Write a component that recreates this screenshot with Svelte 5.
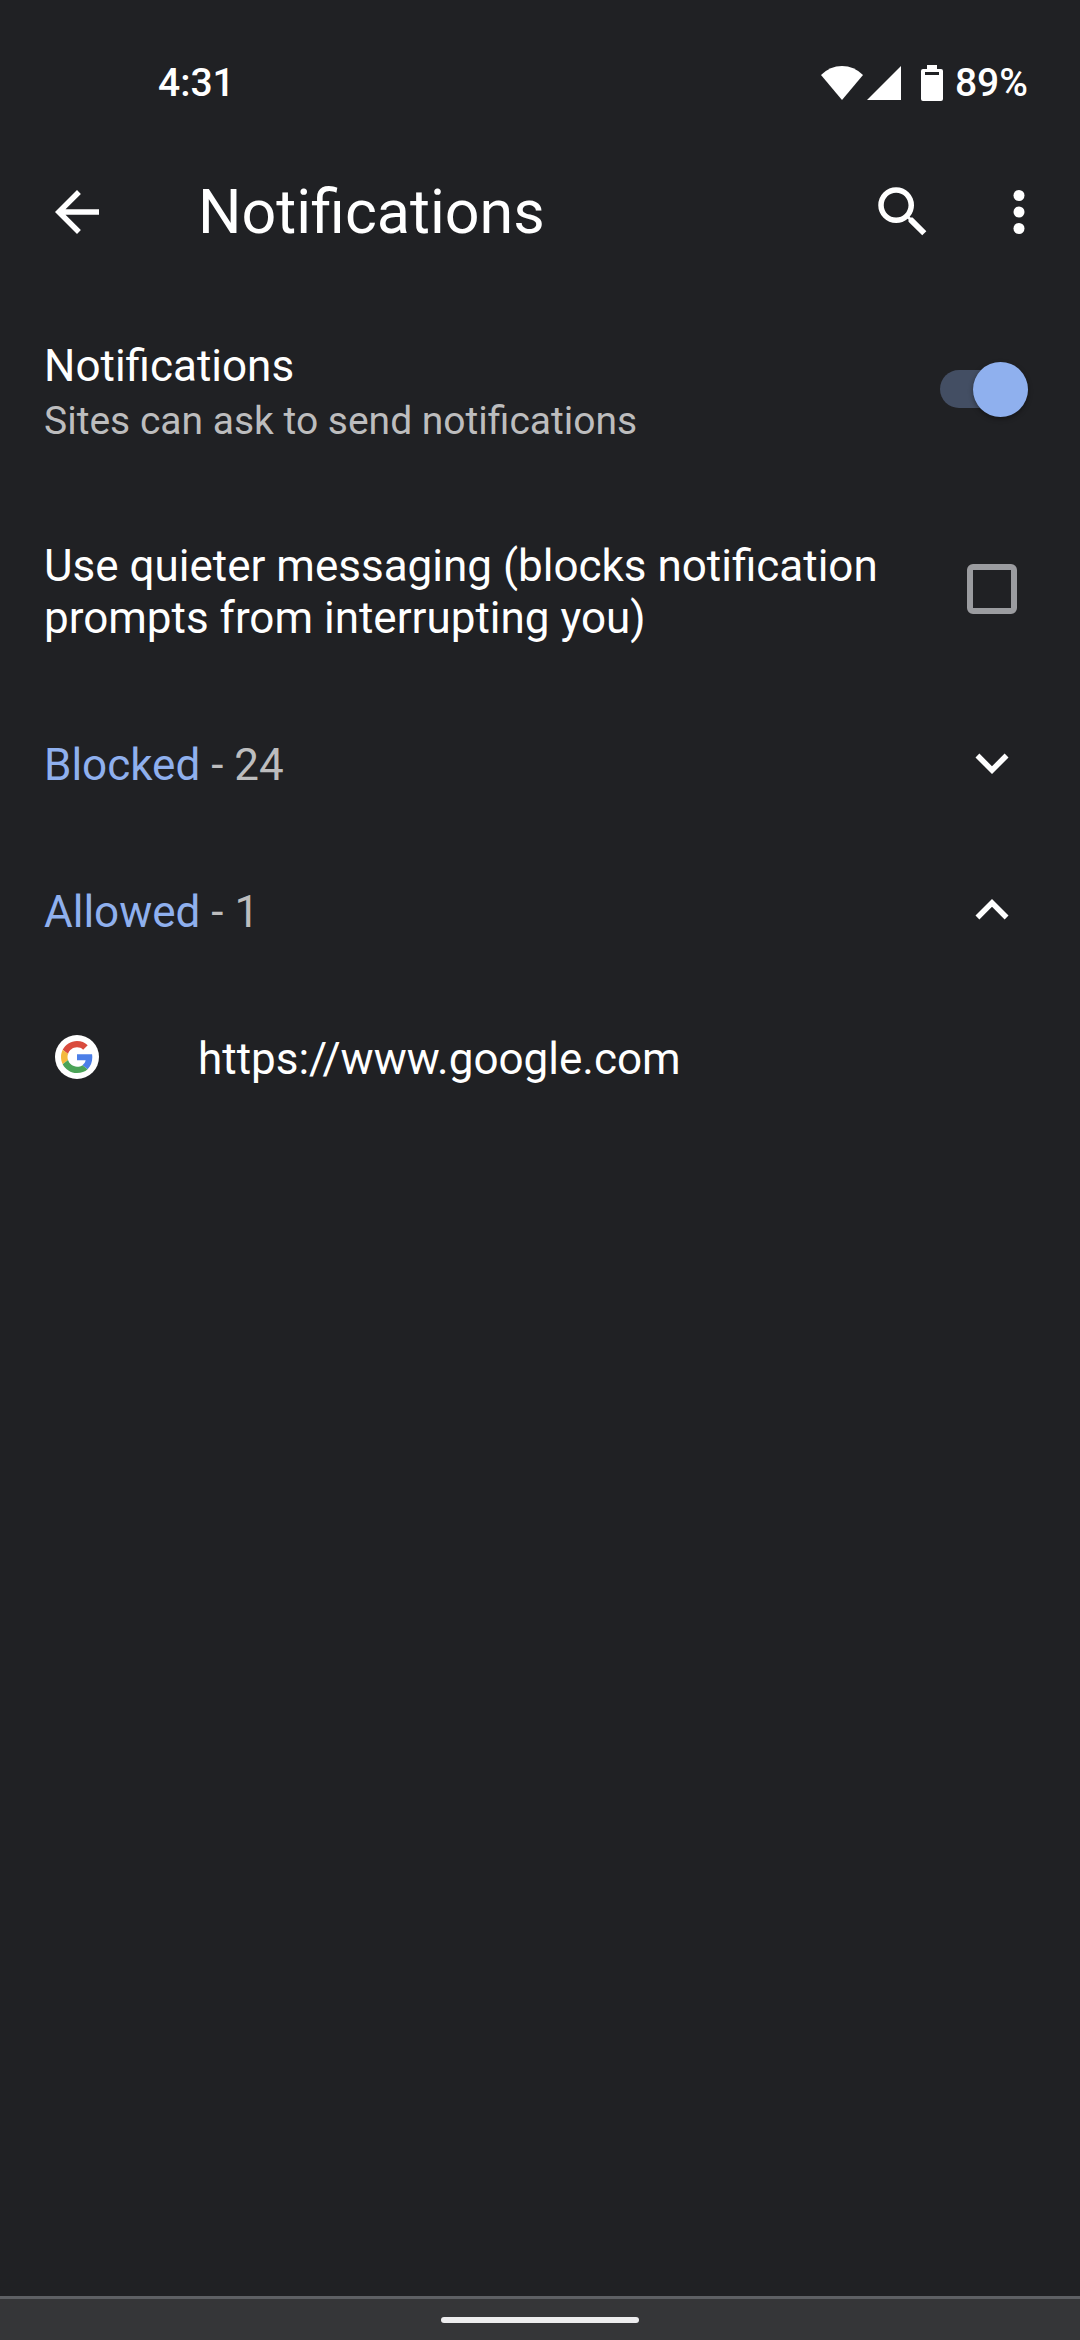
<script lang="ts">
  let askToSend: boolean = $state(true);
  let quieter: boolean = $state(false);
  let blockedOpen: boolean = $state(false);
  let allowedOpen: boolean = $state(true);

  const blockedCount = 24;
  const allowedSites: string[] = ["https://www.google.com"];
</script>

{#snippet chevron(open: boolean)}
  <svg class="icon" viewBox="0 0 24 24" aria-hidden="true">
    {#if open}
      <path d="M12 8l-6 6 1.41 1.41L12 10.83l4.59 4.58L18 14z" />
    {:else}
      <path d="M16.59 8.59L12 13.17 7.41 8.59 6 10l6 6 6-6z" />
    {/if}
  </svg>
{/snippet}

<div class="screen">
  <div class="status">
    <span class="time">4:31</span>
    <div class="indicators">
      <svg class="wifi" viewBox="0 0 42 34" aria-hidden="true">
        <path d="M0 9Q9 0 21 0t21 9L21 34z" />
      </svg>
      <svg class="signal" viewBox="0 0 34 34" aria-hidden="true">
        <path d="M34 0v34H0z" />
      </svg>
      <svg class="battery" viewBox="0 0 22 36" aria-hidden="true">
        <path fill-rule="evenodd" d="M6 0h10v4h4q2 0 2 2v28q0 2-2 2H2q-2 0-2-2V6q0-2 2-2h4zM4 7v3h14V7z" />
      </svg>
      <span class="percent">89%</span>
    </div>
  </div>

  <header>
    <button aria-label="Back">
      <svg class="icon" viewBox="0 0 24 24" aria-hidden="true">
        <path d="M20 11H7.83l5.59-5.59L12 4l-8 8 8 8 1.41-1.41L7.83 13H20z" />
      </svg>
    </button>
    <h1>Notifications</h1>
    <button aria-label="Search">
      <svg class="icon" viewBox="0 0 24 24" aria-hidden="true">
        <path d="M15.5 14h-.79l-.28-.27A6.471 6.471 0 0 0 16 9.5 6.5 6.5 0 1 0 9.5 16c1.61 0 3.09-.59 4.23-1.57l.27.28v.79l5 4.99L20.49 19l-4.99-5zm-6 0C7.01 14 5 11.99 5 9.5S7.01 5 9.5 5 14 7.01 14 9.5 11.99 14 9.5 14z" />
      </svg>
    </button>
    <button aria-label="More options">
      <svg class="icon" viewBox="0 0 24 24" aria-hidden="true">
        <circle cx="12" cy="6" r="2" />
        <circle cx="12" cy="12" r="2" />
        <circle cx="12" cy="18" r="2" />
      </svg>
    </button>
  </header>

  <main>
    <label class="row tall">
      <span class="label">
        Notifications
        <small>Sites can ask to send notifications</small>
      </span>
      <input class="switch" type="checkbox" role="switch" bind:checked={askToSend} />
    </label>

    <label class="row tall">
      <span class="label">Use quieter messaging (blocks notification prompts from interrupting you)</span>
      <input class="check" type="checkbox" bind:checked={quieter} />
    </label>

    <button class="row" aria-expanded={blockedOpen} onclick={() => (blockedOpen = !blockedOpen)}>
      <span class="label"><span class="group">Blocked</span> - {blockedCount}</span>
      {@render chevron(blockedOpen)}
    </button>

    <button class="row" aria-expanded={allowedOpen} onclick={() => (allowedOpen = !allowedOpen)}>
      <span class="label"><span class="group">Allowed</span> - {allowedSites.length}</span>
      {@render chevron(allowedOpen)}
    </button>

    {#if allowedOpen}
      {#each allowedSites as site}
        <a class="row site" href={site}>
          <span class="favicon">
            <svg viewBox="0 0 48 48" aria-hidden="true">
              <path fill="#d94b3d" d="M24 9.5c3.54 0 6.71 1.22 9.21 3.6l6.85-6.85C35.9 2.38 30.47 0 24 0 14.62 0 6.51 5.38 2.56 13.22l7.98 6.19C12.43 13.72 17.74 9.5 24 9.5z" />
              <path fill="#4c7fe8" d="M46.98 24.55c0-1.57-.15-3.09-.38-4.55H24v9.02h12.94c-.58 2.96-2.26 5.48-4.78 7.18l7.73 6c4.51-4.18 7.09-10.36 7.09-17.65z" />
              <path fill="#f4b93b" d="M10.53 28.59c-.48-1.45-.76-2.99-.76-4.59s.27-3.14.76-4.59l-7.98-6.19C.92 16.46 0 20.12 0 24c0 3.88.92 7.54 2.56 10.78l7.97-6.19z" />
              <path fill="#4aa357" d="M24 48c6.48 0 11.93-2.13 15.89-5.81l-7.73-6c-2.15 1.45-4.92 2.3-8.16 2.3-6.26 0-11.57-4.22-13.47-9.91l-7.98 6.19C6.51 42.62 14.62 48 24 48z" />
            </svg>
          </span>
          <span class="label">{site}</span>
        </a>
      {/each}
    {/if}
  </main>

  <div class="gestures"><span></span></div>
</div>

<style>
  :global(body) {
    background: #202124;
  }

  .screen {
    display: flex;
    flex-direction: column;
    min-height: 100vh;
    color: #fff;
    font-family: Roboto, sans-serif;
    font-size: 44px;
    line-height: 52px;
  }

  .status {
    display: flex;
    justify-content: space-between;
    box-sizing: border-box;
    height: 135px;
    padding: 60px 52px 0 158px;
    font-size: 39px;
    font-weight: 500;
    line-height: 46px;
  }

  .indicators {
    display: flex;
    align-items: center;
    height: 46px;
  }

  svg {
    display: block;
    flex: none;
    fill: currentColor;
  }

  .wifi {
    width: 42px;
    height: 34px;
    margin-right: 4px;
  }

  .signal {
    width: 34px;
    height: 34px;
    margin-right: 20px;
  }

  .battery {
    width: 22px;
    height: 36px;
    margin-right: 12px;
  }

  .icon {
    width: 66px;
    height: 66px;
  }

  button {
    padding: 0;
    border: 0;
    background: none;
    color: inherit;
    font: inherit;
    text-align: left;
    cursor: pointer;
  }

  header {
    display: flex;
    align-items: center;
    gap: 50px;
    height: 154px;
    padding: 0 28px 0 44px;
  }

  h1 {
    flex: 1;
    margin: 0 0 0 38px;
    font-size: 61px;
    font-weight: 400;
    line-height: 72px;
  }

  main {
    flex: 1;
  }

  .row {
    display: flex;
    align-items: center;
    justify-content: space-between;
    box-sizing: border-box;
    width: 100%;
    min-height: 147px;
    padding: 0 55px 0 44px;
    color: inherit;
    text-decoration: none;
  }

  .tall {
    min-height: 200px;
    padding-right: 52px;
  }

  .label {
    max-width: 850px;
    padding-top: 5px;
  }

  button .label {
    color: #bdbdbe;
  }

  .label small {
    display: block;
    margin-top: 6px;
    color: #bdbdbe;
    font-size: 39px;
    line-height: 46px;
  }

  .label .group {
    color: #8fb0ee;
  }

  input {
    appearance: none;
    flex: none;
    margin: 0;
  }

  .switch {
    display: flex;
    align-items: center;
    width: 88px;
    height: 38px;
    border-radius: 19px;
    background: #5f6368;
  }

  .switch::before {
    content: "";
    width: 55px;
    height: 55px;
    border-radius: 50%;
    background: #bdc1c6;
    box-shadow: 0 2px 5px #00000060;
  }

  .switch:checked {
    justify-content: flex-end;
    background: #434e63;
  }

  .switch:checked::before {
    background: #8fb0ee;
  }

  .check {
    box-sizing: border-box;
    width: 50px;
    height: 50px;
    margin-right: 11px;
    border: 6px solid #9b9ca0;
    border-radius: 6px;
  }

  .check:checked {
    border-color: #8fb0ee;
    background: #8fb0ee;
  }

  .site {
    justify-content: flex-start;
    gap: 99px;
    padding-left: 55px;
  }

  .favicon {
    display: grid;
    place-items: center;
    width: 44px;
    height: 44px;
    border-radius: 50%;
    background: #fff;
  }

  .favicon svg {
    width: 32px;
    height: 32px;
  }

  .gestures {
    display: flex;
    align-items: center;
    justify-content: center;
    height: 41px;
    border-top: 3px solid #5e6064;
    background: #353638;
  }

  .gestures span {
    width: 198px;
    height: 6px;
    border-radius: 3px;
    background: #ededee;
  }
</style>
